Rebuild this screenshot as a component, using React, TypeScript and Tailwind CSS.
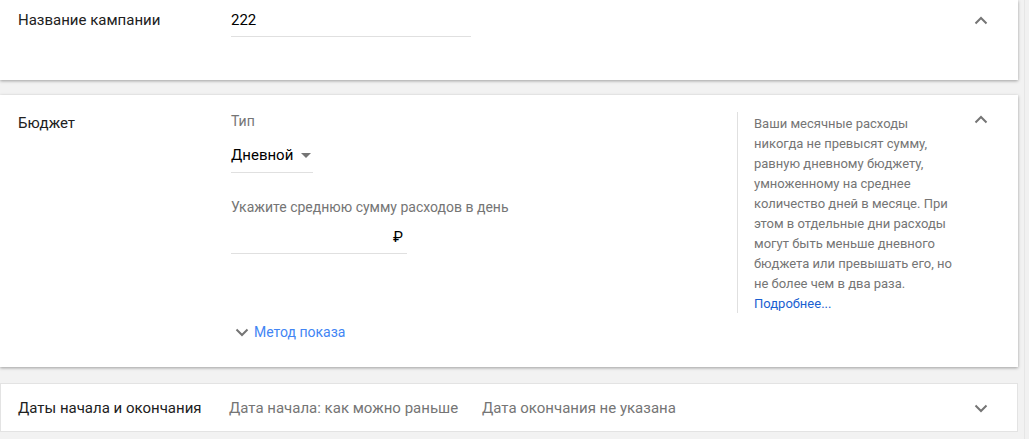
import React from "react";

const font = { fontFamily: "Roboto, 'Noto Sans', Arial, sans-serif" };

function ChevronUp() {
  return (
    <svg width="14" height="9" viewBox="0 0 14 9" fill="none">
      <path d="M1.5 7.5 L7 2 L12.5 7.5" stroke="#757575" strokeWidth="2" />
    </svg>
  );
}

function ChevronDown({ color = "#757575" }: { color?: string }) {
  return (
    <svg width="14" height="9" viewBox="0 0 14 9" fill="none">
      <path d="M1.5 1.5 L7 7 L12.5 1.5" stroke={color} strokeWidth="2" />
    </svg>
  );
}

const helpLines = [
  "Ваши месячные расходы",
  "никогда не превысят сумму,",
  "равную дневному бюджету,",
  "умноженному на среднее",
  "количество дней в месяце. При",
  "этом в отдельные дни расходы",
  "могут быть меньше дневного",
  "бюджета или превышать его, но",
  "не более чем в два раза.",
];

export default function App() {
  return (
    <div className="h-[439px] w-[1029px] overflow-hidden bg-[#f2f2f2] flex" style={font}>
      <div className="w-[1018px] flex flex-col">
        {/* Campaign name */}
        <section className="h-[80px] bg-white shadow-[0_1px_3px_rgba(0,0,0,0.35)] flex pl-[18px] pt-[10px]">
          <div className="w-[213px] text-[15px] leading-[20px] text-[#212121]">Название кампании</div>
          <div className="w-[240px]">
            <div className="text-[15px] leading-[20px] text-[#000]">222</div>
            <div className="mt-[6px] h-px bg-[#e0e0e0]" />
          </div>
          <div className="ml-auto mr-[30px] mt-[6px]">
            <ChevronUp />
          </div>
        </section>

        {/* Budget */}
        <section className="mt-[15px] h-[272px] bg-white shadow-[0_1px_3px_rgba(0,0,0,0.35)] flex pl-[18px] pt-[18px]">
          <div className="w-[213px] text-[15px] leading-[20px] text-[#212121]">Бюджет</div>
          <div className="w-[506px] flex flex-col">
            <div className="text-[14px] leading-[20px] text-[#757575] -mt-[2px]">Тип</div>
            <div className="mt-[14px] w-[82px]">
              <div className="flex items-center text-[15px] leading-[20px] text-[#000]">
                Дневной
                <svg className="ml-[8px]" width="10" height="5" viewBox="0 0 10 5">
                  <path d="M0 0 L10 0 L5 5 Z" fill="#757575" />
                </svg>
              </div>
              <div className="mt-[7px] h-px bg-[#e0e0e0]" />
            </div>
            <div className="mt-[24px] text-[14px] leading-[20px] text-[#757575]">
              Укажите среднюю сумму расходов в день
            </div>
            <div className="mt-[10px] w-[176px]">
              <div className="flex justify-end pr-[4px] text-[15px] leading-[20px] text-[#000]">₽</div>
              <div className="mt-[6px] h-px bg-[#e0e0e0]" />
            </div>
            <div className="mt-[68px] flex items-center text-[14px] leading-[20px] text-[#4285f4] pl-[4px]">
              <ChevronDown />
              <span className="ml-[5px]">Метод показа</span>
            </div>
          </div>
          <div className="mt-[-1px] h-[201px] border-l border-[#e0e0e0] pl-[16px] w-[230px] text-[13px] leading-[20px] text-[#757575]">
            <div className="mt-[2px]">
              {helpLines.map((l) => (
                <div key={l} className="whitespace-nowrap">{l}</div>
              ))}
              <div className="text-[#1a5fd1]">Подробнее...</div>
            </div>
          </div>
          <div className="ml-auto mr-[30px] mt-[2px]">
            <ChevronUp />
          </div>
        </section>

        {/* Dates */}
        <section className="mt-[16px] h-[49px] bg-white border border-[#e3e3e3] flex items-center pl-[17px] text-[15px] leading-[20px]">
          <div className="w-[211px] text-[#212121]">Даты начала и окончания</div>
          <div className="w-[253px] text-[#757575]">Дата начала: как можно раньше</div>
          <div className="text-[#757575]">Дата окончания не указана</div>
          <div className="ml-auto mr-[29px] mt-[1px]">
            <ChevronDown />
          </div>
        </section>
      </div>
      <div className="w-[6px]" />
      <div className="w-[5px] h-full border-l border-[#e6e6e6] bg-[#f1f1f1]" />
    </div>
  );
}
